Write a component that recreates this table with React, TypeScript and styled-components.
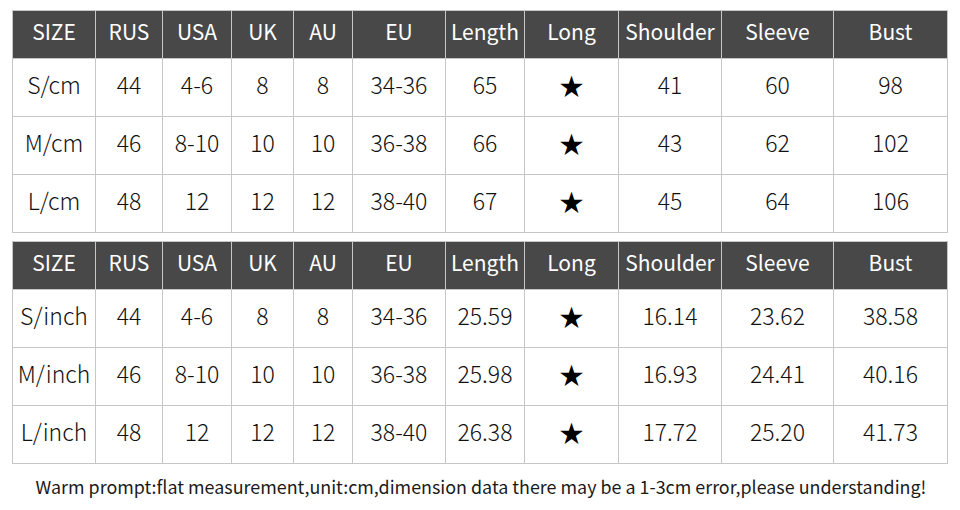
import styled, { createGlobalStyle } from 'styled-components';

const GlobalStyle = createGlobalStyle`
  html, body {
    margin: 0;
    padding: 0;
    background: #ffffff;
  }
  body {
    font-family: "Noto Sans CJK SC", "Noto Sans", sans-serif;
  }
`;

const Page = styled.div`
  width: 960px;
  height: 510px;
  box-sizing: border-box;
  padding: 10px 13px 0 12px;
  display: flex;
  flex-direction: column;
  gap: 8px;
`;

const Table = styled.table`
  width: 935px;
  border-collapse: collapse;
  table-layout: fixed;
  border: 1px solid #c6c6c6;
`;

const HeadCell = styled.th`
  height: 48px;
  padding: 0 0 6px;
  box-sizing: border-box;
  background: #484848;
  color: #ffffff;
  font-weight: 400;
  font-size: 21px;
  text-align: center;
  border: 1px solid #c6c6c6;
  line-height: 1;
`;

const Cell = styled.td`
  height: 58px;
  padding: 0 0 6px;
  box-sizing: border-box;
  color: #111;
  font-size: 23px;
  font-weight: 300;
  text-align: center;
  border: 1px solid #c6c6c6;
  line-height: 1;
`;

const Star = styled.span`
  font-size: 24px;
  font-weight: 400;
  color: #000;
`;

const Note = styled.div`
  margin-top: 1px;
  text-align: center;
  font-size: 17.9px;
  font-weight: 400;
  color: #1a1a1a;
  padding-left: 3px;
`;

const widths = [83, 67, 69, 62, 59, 93, 79, 94, 103, 112, 114];
const heads = ['SIZE', 'RUS', 'USA', 'UK', 'AU', 'EU', 'Length', 'Long', 'Shoulder', 'Sleeve', 'Bust'];

const cmRows = [
  ['S/cm', '44', '4-6', '8', '8', '34-36', '65', '*', '41', '60', '98'],
  ['M/cm', '46', '8-10', '10', '10', '36-38', '66', '*', '43', '62', '102'],
  ['L/cm', '48', '12', '12', '12', '38-40', '67', '*', '45', '64', '106'],
];

const inchRows = [
  ['S/inch', '44', '4-6', '8', '8', '34-36', '25.59', '*', '16.14', '23.62', '38.58'],
  ['M/inch', '46', '8-10', '10', '10', '36-38', '25.98', '*', '16.93', '24.41', '40.16'],
  ['L/inch', '48', '12', '12', '12', '38-40', '26.38', '*', '17.72', '25.20', '41.73'],
];

const SizeTable = ({ rows }: { rows: string[][] }) => (
  <Table>
    <colgroup>
      {widths.map((w, i) => (
        <col key={i} style={{ width: w }} />
      ))}
    </colgroup>
    <thead>
      <tr>
        {heads.map((h) => (
          <HeadCell key={h}>{h}</HeadCell>
        ))}
      </tr>
    </thead>
    <tbody>
      {rows.map((r) => (
        <tr key={r[0]}>
          {r.map((v, i) => (
            <Cell key={i}>{v === '*' ? <Star>★</Star> : v}</Cell>
          ))}
        </tr>
      ))}
    </tbody>
  </Table>
);

export default function App() {
  return (
    <>
      <GlobalStyle />
      <Page>
        <SizeTable rows={cmRows} />
        <SizeTable rows={inchRows} />
        <Note>
          Warm prompt:flat measurement,unit:cm,dimension data there may be a 1-3cm error,please understanding!
        </Note>
      </Page>
    </>
  );
}
